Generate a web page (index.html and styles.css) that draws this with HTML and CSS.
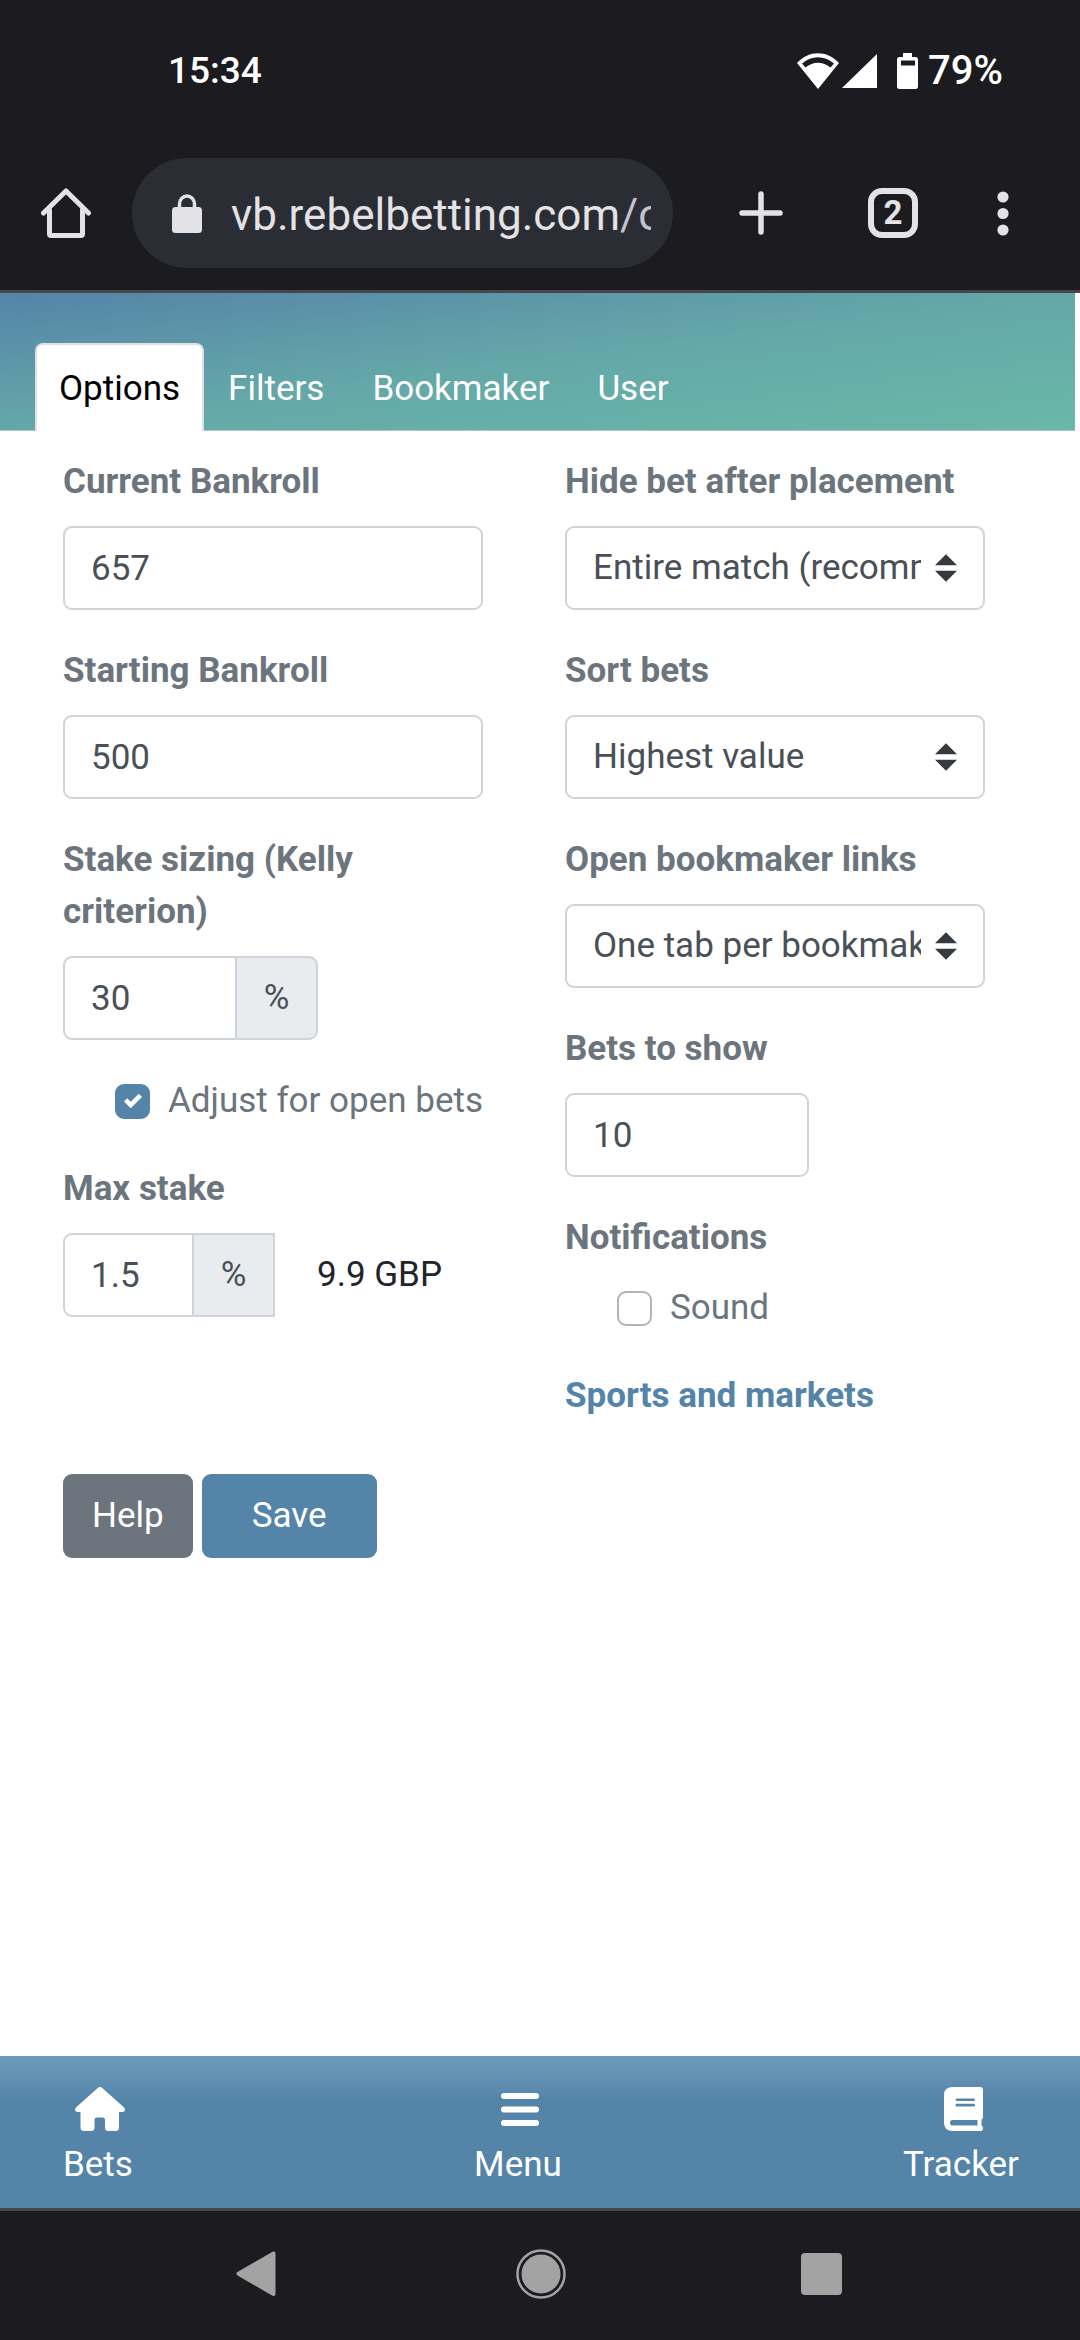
FILE: index.html
```
<!DOCTYPE html>
<html lang="en">
<head>
    <meta charset="UTF-8">
    <meta name="viewport" content="width=device-width, initial-scale=1.0">
    <title>Options</title>
    <link rel="stylesheet" href="styles.css">
</head>
<body>

<div class="status-bar">
    <span class="time">15:34</span>
    <div class="status-icons">
        <svg width="42" height="36" viewBox="0 0 42 36">
            <path fill="#fff" fill-rule="evenodd" d="M0 10C12-3 30-3 42 10L21 36ZM5 10.500L8.500 14.500C16 8 26 8 33.500 14.500L37 10.500C27 2 15 2 5 10.500Z"/>
        </svg>
        <svg width="35" height="36" viewBox="0 0 35 36">
            <path fill="#fff" d="M35 1v34H0z"/>
        </svg>
        <svg class="battery" width="21" height="36" viewBox="0 0 21 36">
            <path fill="#fff" fill-rule="evenodd" d="M6 0h9v4h3.500q2.500 0 2.500 2.500v27q0 2.500-2.500 2.500h-16q-2.500 0-2.500-2.500v-27q0-2.500 2.500-2.500H6zM4 7.500v5h14v-5z"/>
        </svg>
        <span class="battery-level">79%</span>
    </div>
</div>

<div class="browser-bar">
    <button type="button" class="icon-button" aria-label="Home">
        <svg width="50" height="50" viewBox="0 0 50 50" fill="none" stroke="#e3e2e6" stroke-width="5" stroke-linecap="round" stroke-linejoin="round">
            <path d="M2.500 25 25 3l22.500 22"/>
            <path d="M8.500 22v24q0 1.500 1.500 1.500h30q1.500 0 1.500-1.500V22"/>
        </svg>
    </button>
    <button type="button" class="url">
        <svg width="30" height="39" viewBox="0 0 30 39">
            <rect y="13" width="30" height="26" rx="3.500" fill="#e3e2e6"/>
            <path d="M7.500 15V10a7.500 8 0 0 1 15 0v5" fill="none" stroke="#e3e2e6" stroke-width="3.500"/>
        </svg>
        <span class="url-text">vb.rebelbetting.com<span class="url-path">/options</span></span>
    </button>
    <button type="button" class="icon-button new-tab" aria-label="New tab">
        <svg width="44" height="44" viewBox="0 0 44 44" stroke="#e3e2e6" stroke-width="5.500" stroke-linecap="round">
            <path d="M22 3v38M3 22h38"/>
        </svg>
    </button>
    <button type="button" class="tab-count" aria-label="Open tabs">2</button>
    <button type="button" class="icon-button" aria-label="More">
        <svg width="12" height="45" viewBox="0 0 12 45" fill="#e3e2e6">
            <circle cx="6" cy="6" r="5.600"/>
            <circle cx="6" cy="22.500" r="5.600"/>
            <circle cx="6" cy="39" r="5.600"/>
        </svg>
    </button>
</div>

<header class="tabs">
    <a class="tab active" href="#options">Options</a>
    <a class="tab" href="#filters">Filters</a>
    <a class="tab" href="#bookmaker">Bookmaker</a>
    <a class="tab" href="#user">User</a>
</header>

<main>
    <form id="optionsForm">
        <div class="columns">
            <div class="column">
                <div class="form-group">
                    <label for="bankroll">Current Bankroll</label>
                    <input type="text" class="control" id="bankroll" name="bankroll" inputmode="decimal" value="657">
                </div>

                <div class="form-group">
                    <label for="start_bankroll">Starting Bankroll</label>
                    <input type="text" class="control" id="start_bankroll" name="start_bankroll" inputmode="decimal" value="500">
                </div>

                <div class="form-group">
                    <label for="kelly">Stake sizing (Kelly criterion)</label>
                    <div class="input-group kelly">
                        <input type="text" class="control" id="kelly" name="kelly" inputmode="decimal" value="30">
                        <span class="addon rounded">%</span>
                    </div>
                </div>

                <div class="check">
                    <input type="checkbox" id="adjust" name="adjust" checked>
                    <label for="adjust">Adjust for open bets</label>
                </div>

                <div class="form-group">
                    <label for="max_stake">Max stake</label>
                    <div class="stake-row">
                        <div class="input-group max-stake">
                            <input type="text" class="control" id="max_stake" name="max_stake" inputmode="decimal" value="1.5">
                            <span class="addon">%</span>
                        </div>
                        <span class="amount">9.9 GBP</span>
                    </div>
                </div>
            </div>

            <div class="column">
                <div class="form-group">
                    <label for="hide_bet">Hide bet after placement</label>
                    <select class="control" id="hide_bet" name="hide_bet">
                        <option>Entire match (recommended)</option>
                    </select>
                </div>

                <div class="form-group">
                    <label for="sort_bets">Sort bets</label>
                    <select class="control" id="sort_bets" name="sort_bets">
                        <option>Highest value</option>
                    </select>
                </div>

                <div class="form-group">
                    <label for="links">Open bookmaker links</label>
                    <select class="control" id="links" name="links">
                        <option>One tab per bookmaker</option>
                    </select>
                </div>

                <div class="form-group">
                    <label for="bets_to_show">Bets to show</label>
                    <input type="text" class="control short" id="bets_to_show" name="bets_to_show" inputmode="numeric" value="10">
                </div>

                <h2>Notifications</h2>
                <div class="check">
                    <input type="checkbox" id="sound" name="sound">
                    <label for="sound">Sound</label>
                </div>

                <a class="markets" href="#markets">Sports and markets</a>
            </div>
        </div>

        <div class="actions">
            <button type="button" class="btn btn-help">Help</button>
            <button type="submit" class="btn btn-save">Save</button>
        </div>
    </form>
</main>

<nav class="app-nav">
    <a href="#bets">
        <svg width="50" height="44" viewBox="0 0 50 44">
            <path fill="#fff" d="M23 .8Q25-.8 27 .8L48.800 20.200Q50 21.500 50 22.500Q50 25 47.200 25H44V40.500Q44 44 40.500 44H33.500Q30 44 30 40.500V33Q30 30.500 27.500 30.500H22Q19.500 30.500 19.500 33V40.500Q19.500 44 16 44H9Q5.500 44 5.500 40.500V25H2.800Q0 25 0 22.500Q0 21.500 1.200 20.200Z"/>
        </svg>
        <span>Bets</span>
    </a>
    <a href="#menu">
        <svg width="38" height="44" viewBox="0 0 38 44" fill="#fff">
            <rect y="6" width="38" height="6" rx="3"/>
            <rect y="19.500" width="38" height="6" rx="3"/>
            <rect y="33" width="38" height="6" rx="3"/>
        </svg>
        <span>Menu</span>
    </a>
    <a href="#tracker">
        <svg width="39" height="44" viewBox="0 0 39 44">
            <path fill="#fff" fill-rule="evenodd" d="M8 0H36Q39 0 39 3V30Q39 32 37.500 32.800V38.500Q39 39.200 39 41.200Q39 44 36.500 44H8Q0 43.500 0 36V8Q0 .5 8 0ZM13 11.500Q11.500 11.500 11.500 12.800Q11.500 14 13 14H29.500Q31 14 31 12.800Q31 11.500 29.500 11.500ZM13 16.800Q11.500 16.800 11.500 18.200Q11.500 19.500 13 19.500H29.500Q31 19.500 31 18.200Q31 16.800 29.500 16.800ZM8.500 33Q6 33 6 35.700Q6 38.500 8.500 38.500H33.500V33Z"/>
        </svg>
        <span>Tracker</span>
    </a>
</nav>

<div class="system-nav">
    <button type="button" class="icon-button" aria-label="Back">
        <svg width="46" height="50" viewBox="0 0 46 50">
            <path d="M38.500 4.500v40.500L3.500 24.700z" fill="#a3a3a3" stroke="#a3a3a3" stroke-width="4" stroke-linejoin="round"/>
        </svg>
    </button>
    <button type="button" class="icon-button" aria-label="Home screen">
        <svg width="50" height="50" viewBox="0 0 50 50">
            <circle cx="25" cy="25" r="23.500" fill="none" stroke="#a3a3a3" stroke-width="2.500"/>
            <circle cx="25" cy="25" r="19.500" fill="#a3a3a3"/>
        </svg>
    </button>
    <button type="button" class="icon-button" aria-label="Recent apps">
        <svg width="42" height="42" viewBox="0 0 42 42">
            <rect width="41" height="42" rx="4" fill="#a3a3a3"/>
        </svg>
    </button>
</div>

</body>
</html>
```

FILE: styles.css
```
* {
    box-sizing: border-box;
}
body {
    font-family: Roboto, "Open Sans", sans-serif;
    font-size: 35px;
    line-height: 52px;
    color: #212529;
    background-color: #fff;
    margin: 0;
    min-height: 100vh;
    display: flex;
    flex-direction: column;
}
svg {
    display: block;
    flex: none;
}
a {
    text-decoration: none;
}
button, input, select {
    font-family: inherit;
    font-size: inherit;
    line-height: inherit;
    margin: 0;
}
.icon-button {
    background: none;
    border: none;
    padding: 0;
}

/* phone status bar */
.status-bar {
    display: flex;
    justify-content: space-between;
    align-items: center;
    padding: 45px 77px 61px 168px;
    background-color: #1c1b1f;
    color: #fff;
    font-size: 37px;
    font-weight: 500;
}
.status-icons {
    display: flex;
    align-items: center;
    gap: 3px;
}
.battery {
    margin-left: 17px;
}
.battery-level {
    margin-left: 7px;
    font-size: 40px;
}

/* browser toolbar */
.browser-bar {
    display: flex;
    align-items: center;
    padding: 0 71px 22px 41px;
    background-color: #1c1b1f;
    border-bottom: 3px solid #47464b;
}
.url {
    display: flex;
    align-items: center;
    flex: 1;
    min-width: 0;
    height: 110px;
    margin: 0 66px 0 41px;
    padding: 0 22px 0 40px;
    border: none;
    border-radius: 55px;
    background-color: #2b2d34;
    color: #e3e2e6;
    font-size: 44px;
    text-align: left;
}
.url-text {
    flex: 1;
    min-width: 0;
    margin-left: 29px;
    padding-top: 3px;
    overflow: hidden;
    white-space: nowrap;
}
.url-path {
    color: #c1c4cf;
}
.tab-count {
    width: 50px;
    height: 50px;
    margin: 0 79px 0 85px;
    padding: 0;
    border: 6px solid #e3e2e6;
    border-radius: 14px;
    background: none;
    color: #e3e2e6;
    font-size: 33px;
    line-height: 38px;
    font-weight: bold;
}

/* page tabs */
.tabs {
    display: flex;
    align-items: flex-end;
    margin-right: 5px;
    padding: 50px 35px 0;
    background: linear-gradient(to bottom right, #5484a8, #64a8a8 50%, #6ab8a8);
    box-shadow: inset 0 -1px #adc6c8;
}
.tab {
    padding: 18px 22px 16px;
    border: 2px solid transparent;
    border-bottom: none;
    border-radius: 8px 8px 0 0;
    color: #fff;
}
.tab.active {
    background-color: #fff;
    border-color: #dee2e6;
    color: #000;
}

/* options form */
main {
    flex: 1;
    padding: 25px 95px 24px 63px;
}
.columns {
    display: flex;
    gap: 82px;
}
.column {
    flex: 1;
    min-width: 0;
}
.form-group {
    margin-bottom: 35px;
}
.form-group label, h2 {
    display: block;
    margin: 0 0 18px;
    font-size: 35px;
    font-weight: bold;
    color: #6c757d;
}
.control {
    display: block;
    width: 100%;
    height: 84px;
    padding: 0 26px;
    border: 2px solid #ced4da;
    border-radius: 9px;
    background-color: #fff;
    color: #495057;
}
select.control {
    appearance: none;
    padding-right: 62px;
    background: #fff url("data:image/svg+xml,%3csvg xmlns='http://www.w3.org/2000/svg' viewBox='0 0 4 5'%3e%3cpath fill='%23343a40' d='M2 0L0 2h4zm0 5L0 3h4z'/%3e%3c/svg%3e") no-repeat right 26px center / 22px 28px;
}
.short {
    width: 244px;
}
.input-group {
    display: flex;
}
.input-group .control {
    flex: 1;
    min-width: 0;
    border-radius: 9px 0 0 9px;
}
.kelly {
    width: 255px;
}
.max-stake {
    width: 212px;
}
.addon {
    width: 83px;
    margin-left: -2px;
    padding: 14px 0;
    border: 2px solid #ced4da;
    background-color: #e9ecef;
    color: #495057;
    text-align: center;
}
.addon.rounded {
    border-radius: 0 9px 9px 0;
}
.stake-row {
    display: flex;
    align-items: center;
    gap: 42px;
}
.check {
    display: flex;
    align-items: center;
    gap: 18px;
    margin-bottom: 36px;
    padding-left: 52px;
    color: #6c757d;
    white-space: nowrap;
}
.check input {
    appearance: none;
    flex: none;
    width: 35px;
    height: 35px;
    border: 2px solid #adb5bd;
    border-radius: 9px;
    background-color: #fff;
}
.check input:checked {
    border-color: #5484a8;
    background: #5484a8 url("data:image/svg+xml,%3csvg xmlns='http://www.w3.org/2000/svg' viewBox='0 0 8 8'%3e%3cpath fill='%23fff' d='M6.564.75l-3.59 3.612-1.538-1.55L0 4.26l2.974 2.99L8 2.193z'/%3e%3c/svg%3e") no-repeat center / 18px 18px;
}
.markets {
    display: block;
    color: #5484a8;
    font-weight: bold;
}
.actions {
    display: flex;
    gap: 9px;
    margin-top: 52px;
}
.btn {
    height: 84px;
    padding: 0 29px;
    border: none;
    border-radius: 9px;
    color: #fff;
}
.btn-help {
    background-color: #6c757d;
}
.btn-save {
    padding: 0 50px;
    background-color: #5484a8;
}

/* bottom navigation */
.app-nav {
    display: flex;
    justify-content: space-between;
    padding: 31px 61px 17px 63px;
    background: linear-gradient(#6d9bbc, #5484a8 46px);
}
.app-nav a {
    display: flex;
    flex-direction: column;
    align-items: center;
    gap: 8px;
    color: #fff;
}
.app-nav svg {
    margin-left: 5px;
}
.system-nav {
    display: flex;
    justify-content: center;
    align-items: center;
    gap: 235px;
    height: 132px;
    padding: 0 3px 3px 0;
    border-top: 3px solid #47464b;
    background-color: #1c1b1f;
}
```
